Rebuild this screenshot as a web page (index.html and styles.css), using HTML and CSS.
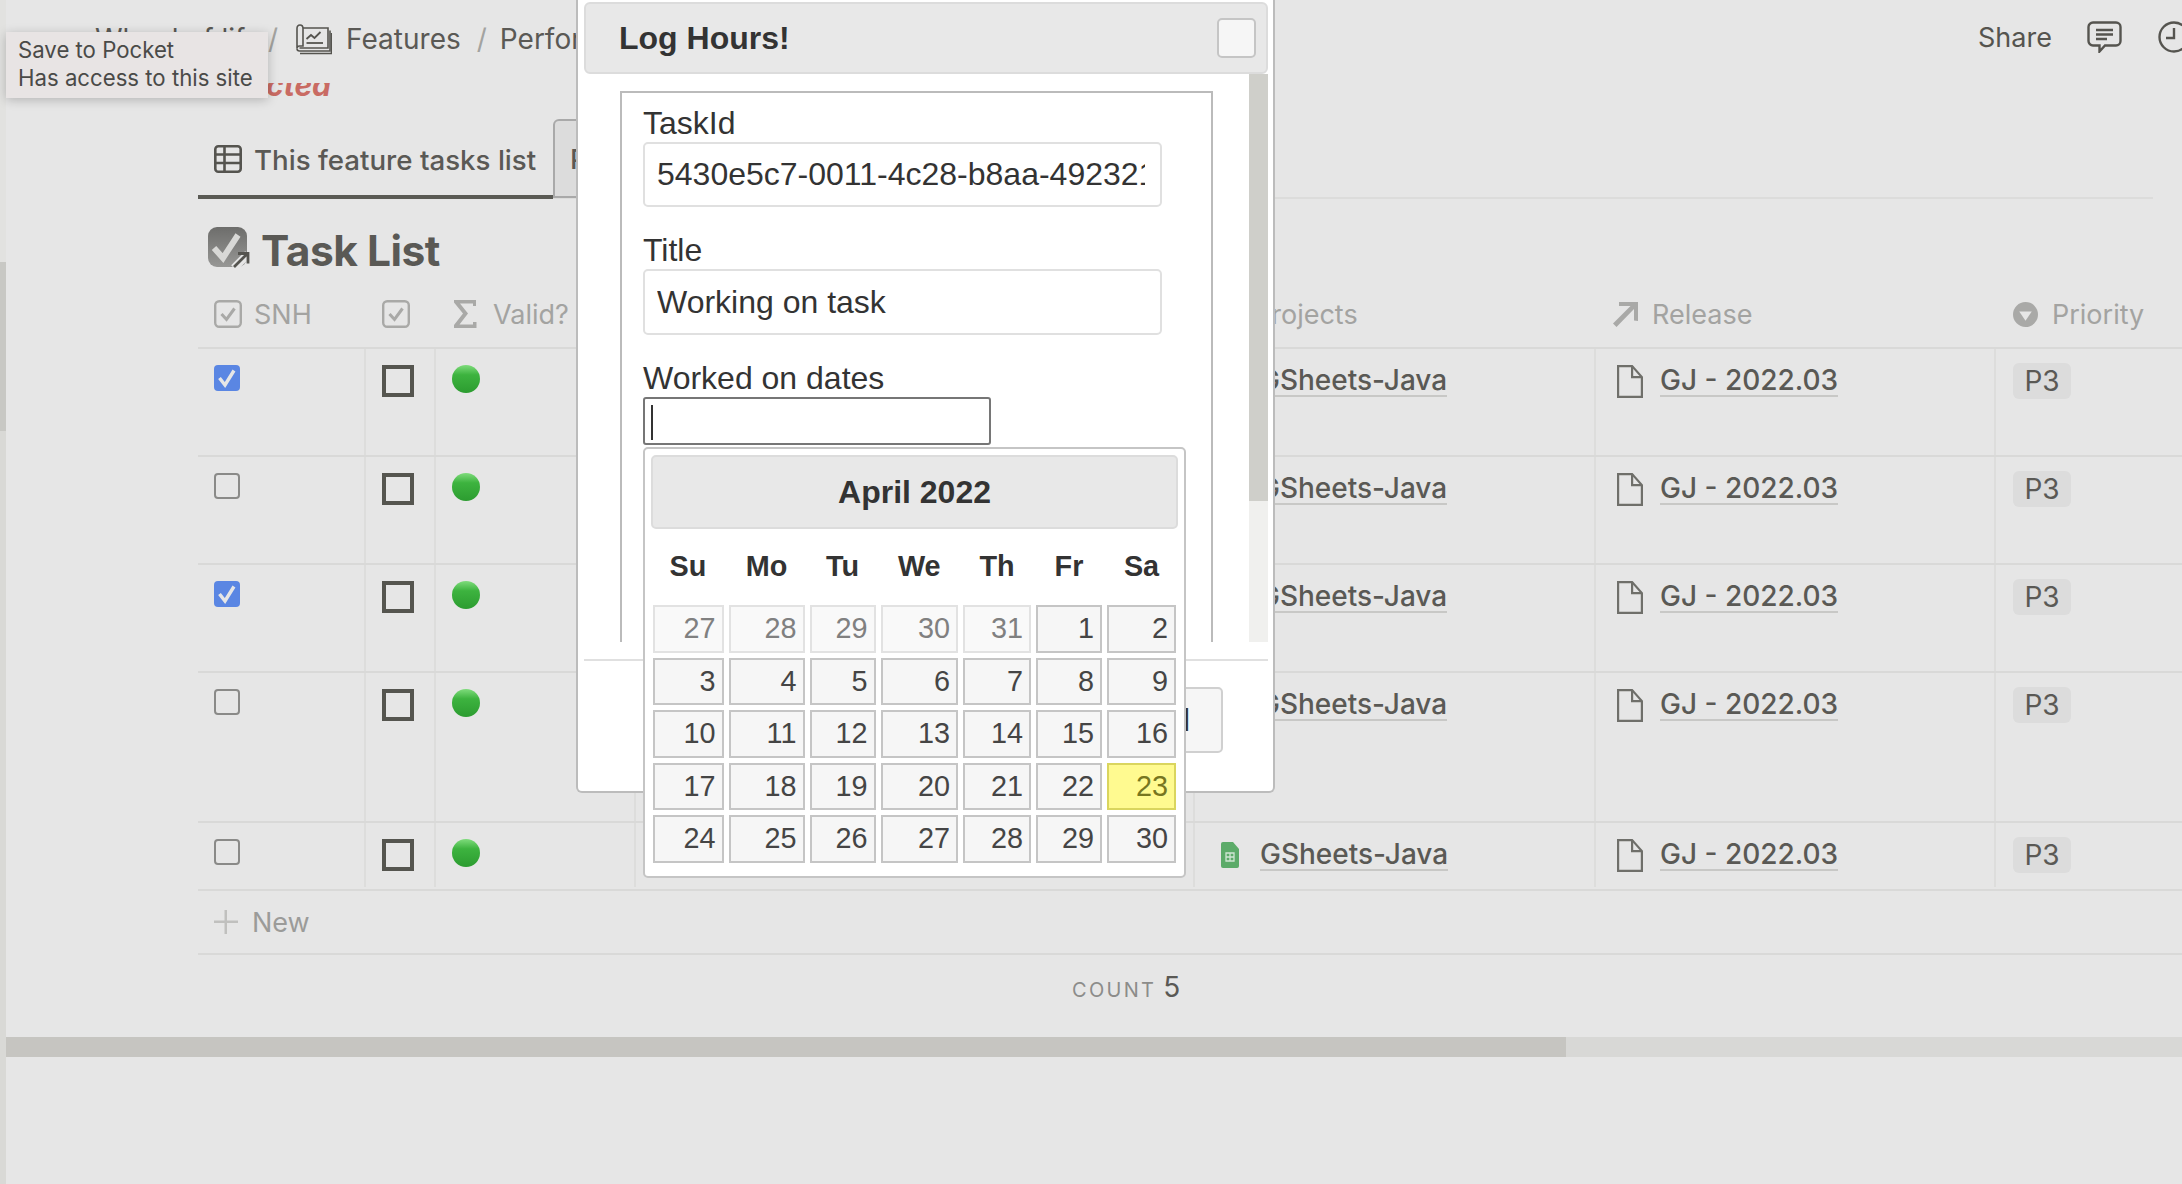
FILE: index.html
```html
<!DOCTYPE html>
<html lang="en">
	<head>
		<meta charset="utf-8" />
		<title>Features - Task List</title>
		<link rel="stylesheet" href="styles.css">
	</head>

	<body>
		<svg class="defs" width="0" height="0">
			<symbol id="tick" viewBox="0 0 26 26">
				<path d="M5.5 13l5.500 7 9-14.500" fill="none" stroke="#e6e6e6" stroke-width="3.400"/>
			</symbol>
			<symbol id="sheet" viewBox="0 0 18 26">
				<path d="M2 0h10l6 7v17a2 2 0 0 1-2 2H2a2 2 0 0 1-2-2V2a2 2 0 0 1 2-2z" fill="#5cab69"/>
				<path d="M5 11h8v8H5zM9 11v8M5 15h8" fill="none" stroke="#cfe6d3" stroke-width="1.300"/>
			</symbol>
			<symbol id="doc" viewBox="0 0 26 33">
				<path d="M1.100 1.100h14l9.800 11v19.800H1.100z" fill="none" stroke="#6f6f6a" stroke-width="2.200"/>
				<path d="M15.100 1.100v11h9.800" fill="none" stroke="#6f6f6a" stroke-width="2.200"/>
			</symbol>
			<symbol id="headcheck" viewBox="0 0 28 28">
				<rect x="1.200" y="1.200" width="25.600" height="25.600" rx="4" fill="none" stroke="#a9a9a7" stroke-width="2.400"/>
				<path d="M7.500 14l5 5.500 8-11" fill="none" stroke="#a9a9a7" stroke-width="3"/>
			</symbol>
			<linearGradient id="taskfill" x1="0" y1="0" x2="0" y2="1">
				<stop offset="0" stop-color="#6d6d6b"/>
				<stop offset="1" stop-color="#979795"/>
			</linearGradient>
		</svg>

		<div class="strip">
			<div class="strip-top"></div>
			<div class="strip-thumb"></div>
		</div>

		<div class="main">
			<div class="topbar">
				<div class="crumbs">
					<span class="crumb-first">Wheel of life</span>
					<span class="slash">/</span>
					<svg class="ico-features" viewBox="0 0 36 31" fill="none" stroke="#55544f" stroke-width="1.600">
						<path d="M1 4.500C1 2.500 2 1 4 1s3 1.500 3 3.500V22H3.500C2 22 1 23 1 24.500z"/>
						<path d="M7 4h25v20H3.500"/>
						<path d="M1 24.500C1 26 2 27 3.500 27H34V6.500"/>
						<path d="M4 29.500H35.500V9"/>
						<path d="M10.500 15l4.500-4 3.500 3 6-6" stroke-width="1.800"/>
						<path d="M10.500 19H27" stroke-width="1.800"/>
					</svg>
					<span>Features</span>
					<span class="slash slash-2">/</span>
					<span>Performance</span>
				</div>
				<div class="top-actions">
					<span>Share</span>
					<svg class="ico-comment" viewBox="0 0 35 32" fill="none" stroke="#55544f" stroke-width="2.400">
						<path d="M6 1.500h23c2.500 0 4.500 2 4.500 4.500v14c0 2.500-2 4.500-4.500 4.500H18l-5.500 6v-6H6c-2.500 0-4.500-2-4.500-4.500V6c0-2.500 2-4.500 4.500-4.500z"/>
						<path d="M9 9h17M9 13.500h17M9 18h11"/>
					</svg>
					<svg class="ico-clock" viewBox="0 0 32 32" fill="none" stroke="#55544f" stroke-width="2.400">
						<circle cx="16" cy="16" r="14.500"/>
						<path d="M16 7v10H8"/>
					</svg>
				</div>
			</div>

			<div class="status"><span>Selected</span></div>

			<div class="tabs">
				<div class="tab tab-on">
					<svg class="ico-table" viewBox="0 0 28 28" fill="none" stroke="#55544f" stroke-width="2.600">
						<rect x="1.300" y="1.300" width="25.400" height="25.400" rx="3"/>
						<path d="M1.300 9.500h25.400M1.300 18h25.400M10.500 1.300v25.400"/>
					</svg>
					<span>This feature tasks list</span>
				</div>
				<div class="tab tab-other"><span>Performance</span></div>
			</div>

			<div class="list-title">
				<svg class="ico-task" viewBox="0 0 42 41">
					<rect x="0" y="0" width="39" height="40" rx="9" fill="url(#taskfill)"/>
					<path d="M6 21l9 10L30 8" fill="none" stroke="#d8d8d6" stroke-width="6"/>
					<path d="M26 41L40 27" fill="none" stroke="#e6e6e6" stroke-width="8"/>
					<path d="M26 40L39 27M30 26.500h10v10" fill="none" stroke="#55544f" stroke-width="2.800"/>
				</svg>
				<span>Task List</span>
			</div>

			<div class="table">
				<div class="row row-head">
					<div class="cell">
						<svg class="ico-head"><use href="#headcheck"/></svg>
						<span>SNH</span>
					</div>
					<div class="cell">
						<svg class="ico-head"><use href="#headcheck"/></svg>
					</div>
					<div class="cell">
						<svg class="ico-sigma" viewBox="0 0 23 28" fill="#a9a9a7">
							<path d="M0 0h22v6h-3V3.500H6l8 10-8.500 11H19V22h3.500v6H0v-3l9-11.500L0 2.500z"/>
						</svg>
						<span>Valid?</span>
					</div>
					<div class="cell"></div>
					<div class="cell"><span class="head-projects">Projects</span></div>
					<div class="cell">
						<svg class="ico-small" viewBox="0 0 25 25" fill="#a9a9a7">
							<path d="M6 0h19v19l-4-0.500V7L3.500 25 0 21.500 17.500 4H6z"/>
						</svg>
						<span>Release</span>
					</div>
					<div class="cell">
						<svg class="ico-small" viewBox="0 0 24 24">
							<circle cx="12" cy="12" r="12" fill="#a9a9a7"/>
							<path d="M6 9h12l-6 9z" fill="#e6e6e6"/>
						</svg>
						<span>Priority</span>
					</div>
				</div>

				<div class="row row-tall">
					<div class="cell"><div class="chk chk-on"><svg><use href="#tick"/></svg></div></div>
					<div class="cell"><div class="box"></div></div>
					<div class="cell"><div class="ball"></div></div>
					<div class="cell"></div>
					<div class="cell"><span class="link">GSheets-Java</span></div>
					<div class="cell"><svg class="doc"><use href="#doc"/></svg><span class="link">GJ - 2022.03</span></div>
					<div class="cell"><div class="badge">P3</div></div>
				</div>
				<div class="row row-tall">
					<div class="cell"><div class="chk chk-off"></div></div>
					<div class="cell"><div class="box"></div></div>
					<div class="cell"><div class="ball"></div></div>
					<div class="cell"></div>
					<div class="cell"><span class="link">GSheets-Java</span></div>
					<div class="cell"><svg class="doc"><use href="#doc"/></svg><span class="link">GJ - 2022.03</span></div>
					<div class="cell"><div class="badge">P3</div></div>
				</div>
				<div class="row row-tall">
					<div class="cell"><div class="chk chk-on"><svg><use href="#tick"/></svg></div></div>
					<div class="cell"><div class="box"></div></div>
					<div class="cell"><div class="ball"></div></div>
					<div class="cell"></div>
					<div class="cell"><span class="link">GSheets-Java</span></div>
					<div class="cell"><svg class="doc"><use href="#doc"/></svg><span class="link">GJ - 2022.03</span></div>
					<div class="cell"><div class="badge">P3</div></div>
				</div>
				<div class="row row-xl">
					<div class="cell"><div class="chk chk-off"></div></div>
					<div class="cell"><div class="box"></div></div>
					<div class="cell"><div class="ball"></div></div>
					<div class="cell"></div>
					<div class="cell"><span class="link">GSheets-Java</span></div>
					<div class="cell"><svg class="doc"><use href="#doc"/></svg><span class="link">GJ - 2022.03</span></div>
					<div class="cell"><div class="badge">P3</div></div>
				</div>
				<div class="row row-short">
					<div class="cell"><div class="chk chk-off"></div></div>
					<div class="cell"><div class="box"></div></div>
					<div class="cell"><div class="ball"></div></div>
					<div class="cell"></div>
					<div class="cell"><svg class="sheet"><use href="#sheet"/></svg><span class="link">GSheets-Java</span></div>
					<div class="cell"><svg class="doc"><use href="#doc"/></svg><span class="link">GJ - 2022.03</span></div>
					<div class="cell"><div class="badge">P3</div></div>
				</div>
			</div>

			<div class="new-row">
				<svg class="ico-plus" viewBox="0 0 24 24" fill="#c0c0be">
					<path d="M10.500 0h2.500v10.500h11v2.500H13v11h-2.500V13H0v-2.500h10.500z"/>
				</svg>
				<span>New</span>
			</div>

			<div class="count-row"><span class="count-label">COUNT</span><span class="count-num">5</span></div>

			<div class="hbar"><div class="hbar-thumb"></div></div>
		</div>

		<div class="tooltip">
			<div>Save to Pocket</div>
			<div>Has access to this site</div>
		</div>

		<div class="modal">
			<div class="modal-head">
				<span>Log Hours!</span>
				<div class="modal-x"></div>
			</div>
			<div class="modal-body">
				<div class="modal-scroll">
					<div class="form-box">
						<div class="lbl">TaskId</div>
						<input class="fld fld-id" type="text" value="5430e5c7-0011-4c28-b8aa-492321a7f0c2">
						<div class="lbl lbl-next">Title</div>
						<input class="fld fld-title" type="text" value="Working on task">
						<div class="lbl lbl-next">Worked on dates</div>
						<div class="fld-date"><i class="caret"></i></div>
					</div>
				</div>
				<div class="vbar"><div class="vbar-thumb"></div></div>
			</div>
			<div class="modal-foot">
				<div class="btn">Cancel</div>
			</div>

			<div class="cal">
				<div class="cal-head">April 2022</div>
				<div class="cal-days">
					<span>Su</span><span>Mo</span><span>Tu</span><span>We</span><span>Th</span><span>Fr</span><span>Sa</span>
				</div>
				<div class="cal-grid">
					<div class="day day-off">27</div><div class="day day-off">28</div><div class="day day-off">29</div><div class="day day-off">30</div><div class="day day-off">31</div><div class="day">1</div><div class="day">2</div>
					<div class="day">3</div><div class="day">4</div><div class="day">5</div><div class="day">6</div><div class="day">7</div><div class="day">8</div><div class="day">9</div>
					<div class="day">10</div><div class="day">11</div><div class="day">12</div><div class="day">13</div><div class="day">14</div><div class="day">15</div><div class="day">16</div>
					<div class="day">17</div><div class="day">18</div><div class="day">19</div><div class="day">20</div><div class="day">21</div><div class="day">22</div><div class="day day-now">23</div>
					<div class="day">24</div><div class="day">25</div><div class="day">26</div><div class="day">27</div><div class="day">28</div><div class="day">29</div><div class="day">30</div>
				</div>
			</div>
		</div>
	</body>
</html>
```
FILE: styles.css
```css
body{
	margin:0;
	width:2182px;
	height:1184px;
	overflow:hidden;
	position:relative;
	display:flex;
	background:#e6e6e6;
	font-family:Inter,"Liberation Sans",sans-serif;
	color:#5a5955;
}
.defs{
	position:absolute;
}
.strip{
	width:6px;
	flex:none;
	background:#d9d9d6;
}
.strip-top{
	height:262px;
	background:#e2e2e0;
}
.strip-thumb{
	height:169px;
	background:#c8c8c4;
}
.main{
	flex:1;
	min-width:0;
	display:flex;
	flex-direction:column;
}

/* top bar */
.topbar{
	height:83px;
	flex:none;
	display:flex;
	justify-content:space-between;
	padding-left:89px;
	box-sizing:border-box;
	font-size:28px;
	overflow:hidden;
}
.crumbs{
	display:flex;
	align-items:center;
	height:78px;
	white-space:nowrap;
}
.crumb-first{
	width:173px;
}
.slash{
	color:#a3a3a0;
}
.ico-features{
	width:36px;
	height:31px;
	margin:0 14px 0 18px;
	flex:none;
}
.slash-2{
	margin:0 13px 0 16px;
}
.top-actions{
	display:flex;
	align-items:center;
	height:74px;
	width:204px;
	flex:none;
	font-size:27px;
	color:#55544f;
}
.ico-comment{
	width:35px;
	height:32px;
	margin-left:35px;
	flex:none;
}
.ico-clock{
	width:32px;
	height:32px;
	margin-left:36px;
	flex:none;
}

.status{
	height:16px;
	flex:none;
	display:flex;
	align-items:flex-end;
	overflow:hidden;
	padding-left:192px;
	font-size:30px;
	line-height:30px;
	font-weight:700;
	font-style:italic;
	color:#c96b63;
}
.status span{
	width:133px;
	text-align:right;
	white-space:nowrap;
	margin-bottom:-1px;
}

/* tabs */
.tabs{
	margin:20px 29px 0 192px;
	height:80px;
	flex:none;
	display:flex;
	border-bottom:2px solid #dcdcdb;
	box-sizing:border-box;
	font-size:27.7px;
	font-weight:500;
}
.tab{
	display:flex;
	align-items:center;
	box-sizing:border-box;
	white-space:nowrap;
}
.tab-on{
	width:355px;
	height:80px;
	padding:6px 0 0 16px;
	gap:12px;
	border-bottom:4px solid #5a5a54;
}
.ico-table{
	width:28px;
	height:28px;
	margin-top:-2px;
}
.tab-other{
	height:79px;
	padding:0 15px;
	background:#dcdcdc;
	border:2px solid #a9a9a9;
	border-radius:6px 6px 0 0;
}
.list-title{
	margin:28px 0 0 202px;
	height:41px;
	flex:none;
	display:flex;
	align-items:center;
	gap:11px;
	font-size:42.5px;
	font-weight:700;
	letter-spacing:-0.5px;
}
.list-title span{
	margin-top:5px;
}
.ico-task{
	width:42px;
	height:41px;
}

/* table */
.table{
	margin:28px 0 0 192px;
	flex:none;
}
.row{
	display:grid;
	grid-template-columns:166px 70px 200px 559px 401px 400px 1fr;
	box-sizing:border-box;
	border-bottom:2px solid #d9d9d8;
	font-size:28px;
	font-weight:500;
}
.row-head{
	height:53px;
	font-size:27px;
	font-weight:400;
	color:#a3a3a1;
}
.row-tall{
	height:108px;
}
.row-xl{
	height:150px;
}
.row-short{
	height:68px;
}
.row-short .cell{
	height:64px;
}
.cell{
	display:flex;
	align-items:flex-start;
	padding:14px 0 0 16px;
	box-sizing:border-box;
	border-left:2px solid #dddddc;
	min-width:0;
	white-space:nowrap;
}
.row .cell:first-child{
	border-left:0;
}
.row .cell:nth-child(5){
	padding-left:64px;
}
.row-short .cell:nth-child(5){
	padding-left:26px;
}
.row .cell:nth-child(6){
	padding-left:21px;
}
.row .cell:nth-child(7){
	padding-left:17px;
}
.row-head .cell,.row-head .cell:nth-child(n){
	border-left-color:transparent;
	padding-top:0;
	padding-left:17px;
	height:36px;
	gap:12px;
	align-items:center;
}
.row-head .cell:first-child,.row-head .cell:nth-child(2){
	padding-left:16px;
}
.row-head .cell:nth-child(3){
	padding-left:18px;
}
.row-head .cell:nth-child(5){
	padding-left:59px;
}
.ico-head{
	width:28px;
	height:28px;
	flex:none;
}
.ico-sigma{
	width:23px;
	height:28px;
	margin-right:4px;
	flex:none;
}
.ico-small{
	width:25px;
	height:25px;
	margin-right:2px;
	flex:none;
}

.chk{
	width:26px;
	height:26px;
	border-radius:4px;
	box-sizing:border-box;
	margin-top:2px;
}
.chk-off{
	border:2px solid #8a8a88;
}
.chk-on{
	background:#5a86e3;
}
.chk-on svg{
	display:block;
	width:26px;
	height:26px;
}
.box{
	width:32px;
	height:32px;
	margin-top:2px;
	border:4px solid #55554f;
	box-sizing:border-box;
}
.ball{
	width:28px;
	height:28px;
	margin-top:2px;
	border-radius:50%;
	background:linear-gradient(#7fdc7c 0,#3db33f 35%,#2c9c30 100%);
}
.sheet{
	width:18px;
	height:26px;
	margin:5px 21px 0 0;
	flex:none;
}
.link{
	box-sizing:border-box;
	border-bottom:2px solid #c8c8c6;
	line-height:29px;
	height:31px;
	margin-top:3px;
}
.doc{
	width:26px;
	height:33px;
	margin:2px 17px 0 0;
	flex:none;
}
.badge{
	width:58px;
	height:36px;
	border-radius:6px;
	background:#dcdcdc;
	text-align:center;
	line-height:36px;
	font-weight:400;
}

.new-row{
	height:64px;
	margin-left:192px;
	flex:none;
	display:flex;
	align-items:center;
	gap:14px;
	padding-left:16px;
	box-sizing:border-box;
	border-bottom:2px solid #d9d9d8;
	font-size:27px;
	color:#9b9b99;
}
.ico-plus{
	width:24px;
	height:24px;
}
.count-row{
	height:82px;
	flex:none;
	box-sizing:border-box;
	display:flex;
	align-items:baseline;
	padding:15px 0 0 1066px;
	gap:7px;
	color:#8c8c8a;
}
.count-label{
	font-size:20px;
	letter-spacing:2.3px;
}
.count-num{
	font-size:28px;
	color:#5a5955;
}
.hbar{
	height:20px;
	flex:none;
	background:#d8d8d6;
}
.hbar-thumb{
	width:1560px;
	height:20px;
	background:#c6c5c1;
}

/* pocket tooltip */
.tooltip{
	position:absolute;
	left:6px;
	top:32px;
	width:262px;
	height:66px;
	padding:4px 0 0 12px;
	box-sizing:border-box;
	background:#e8e4e4;
	box-shadow:0 2px 10px rgba(0,0,0,.22);
	font-size:22.2px;
	line-height:28px;
	color:#4a4a48;
	white-space:nowrap;
}

/* modal */
.modal{
	position:absolute;
	left:576px;
	top:0;
	width:699px;
	height:793px;
	box-sizing:border-box;
	padding:2px 5px 0 6px;
	display:flex;
	flex-direction:column;
	background:#fff;
	border:2px solid #bcbcbc;
	border-top:0;
	border-radius:0 0 6px 6px;
	font-family:"Liberation Sans",Arial,sans-serif;
	font-size:32px;
	color:#333;
}
.modal-head{
	height:72px;
	flex:none;
	box-sizing:border-box;
	display:flex;
	align-items:center;
	justify-content:space-between;
	padding:0 10px 0 33px;
	background:#e8e8e8;
	border:2px solid #dcdcdc;
	border-radius:6px;
	font-weight:700;
}
.modal-x{
	width:39px;
	height:40px;
	box-sizing:border-box;
	background:#f6f6f6;
	border:2px solid #c5c5c5;
	border-radius:5px;
}
.modal-body{
	height:568px;
	flex:none;
	display:flex;
}
.modal-scroll{
	flex:1;
	overflow:hidden;
	padding:17px 36px 0;
}
.form-box{
	height:600px;
	box-sizing:border-box;
	padding:12px 0 0 21px;
	border:2px solid #bbb;
}
.vbar{
	width:19px;
	flex:none;
	background:#f0f0ee;
}
.vbar-thumb{
	height:427px;
	background:#cfcfca;
}
.lbl{
	line-height:36px;
	margin-bottom:1px;
}
.lbl-next{
	margin-top:25px;
}
.fld{
	display:block;
	width:519px;
	box-sizing:border-box;
	margin:0;
	padding:0 15px 0 12px;
	background:#fff;
	border:2px solid #e0e0e0;
	border-radius:5px;
	outline:none;
	font:32px "Liberation Sans",Arial,sans-serif;
	color:#333;
}
.fld-id{
	height:65px;
}
.fld-title{
	height:66px;
}
.fld-date{
	width:348px;
	height:48px;
	box-sizing:border-box;
	padding:6px 0 0 6px;
	border:2px solid #767676;
	border-radius:3px;
}
.caret{
	display:block;
	width:2px;
	height:35px;
	background:#333;
}
.modal-foot{
	flex:1;
	display:flex;
	justify-content:flex-end;
	margin-top:17px;
	padding:26px 45px 0 0;
	border-top:2px solid #e0e0e0;
}
.btn{
	height:66px;
	box-sizing:border-box;
	padding:0 31px;
	line-height:62px;
	background:#f6f6f6;
	border:2px solid #d0d0d0;
	border-radius:5px;
}

/* datepicker, hangs out of the modal */
.cal{
	position:absolute;
	left:65px;
	top:447px;
	width:543px;
	height:431px;
	box-sizing:border-box;
	padding:6px;
	background:#fff;
	border:2px solid #c5c5c5;
	border-radius:5px;
}
.cal-head{
	height:74px;
	box-sizing:border-box;
	background:#e8e8e8;
	border:2px solid #dcdcdc;
	border-radius:5px;
	text-align:center;
	font-weight:700;
	line-height:70px;
}
.cal-days,.cal-grid{
	display:grid;
	grid-template-columns:71px 76px 66px 77.5px 68px 66px 69px;
	column-gap:5px;
	margin-left:1.5px;
}
.cal-days{
	height:76px;
	text-align:center;
	font-size:28.8px;
	font-weight:700;
	line-height:74px;
}
.cal-grid{
	grid-auto-rows:47.5px;
	row-gap:5px;
}
.day{
	box-sizing:border-box;
	padding-right:6px;
	text-align:right;
	line-height:43px;
	font-size:28.8px;
	background:#f6f6f6;
	border:2px solid #c5c5c5;
	color:#454545;
}
.day-off{
	background:#f9f9f9;
	border-color:#e2e2e2;
	color:#808080;
}
.day-now{
	background:#fffa90;
	border-color:#dad55e;
	color:#777620;
}
```
